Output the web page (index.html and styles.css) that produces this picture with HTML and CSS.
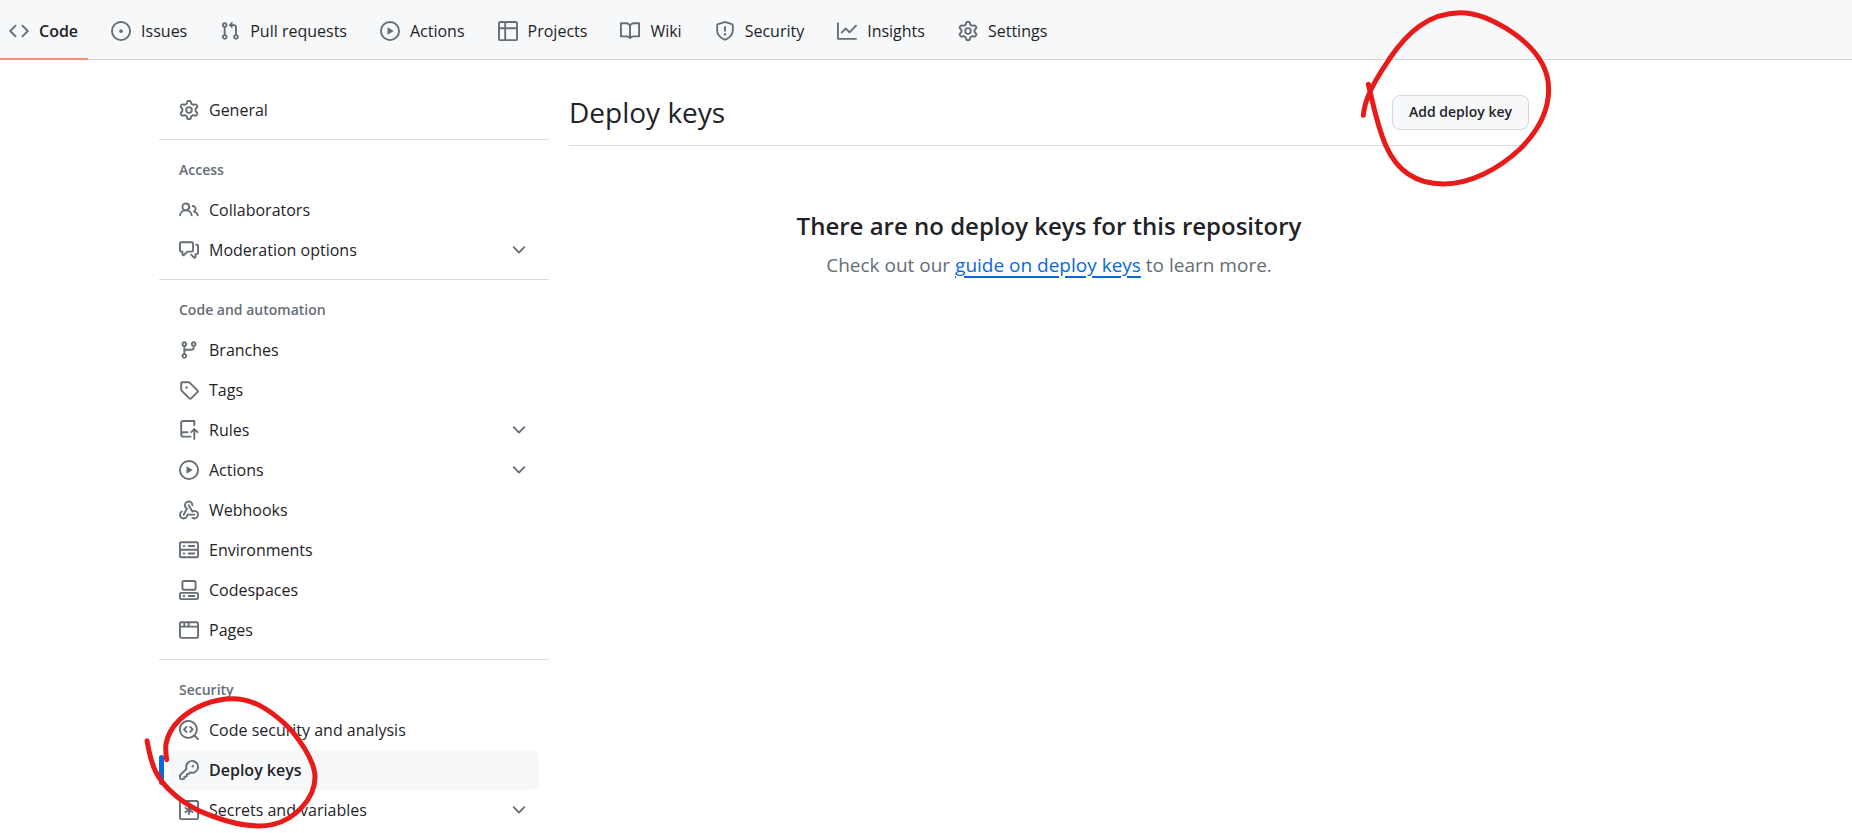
FILE: index.html
```html
<!DOCTYPE html>
<html lang="en">
<head>
<meta charset="utf-8">
<title>Deploy keys</title>
<meta name="viewport" content="width=device-width, initial-scale=1">
<link rel="stylesheet" href="styles.css">
</head>
<body>
<svg class="sprite" aria-hidden="true">
  <symbol id="code" viewBox="0 0 16 16"><path d="m11.28 3.22 4.25 4.25a.75.75 0 0 1 0 1.06l-4.25 4.25a.749.749 0 0 1-1.275-.326.749.749 0 0 1 .215-.734L13.94 8l-3.72-3.72a.749.749 0 0 1 .326-1.275.749.749 0 0 1 .734.215Zm-6.56 0a.751.751 0 0 1 1.042.018.751.751 0 0 1 .018 1.042L2.06 8l3.72 3.72a.749.749 0 0 1-.326 1.275.749.749 0 0 1-.734-.215L.47 8.53a.75.75 0 0 1 0-1.06Z"/></symbol>
  <symbol id="issue" viewBox="0 0 16 16"><path d="M8 9.5a1.5 1.5 0 1 0 0-3 1.5 1.5 0 0 0 0 3Z"/><path d="M8 0a8 8 0 1 1 0 16A8 8 0 0 1 8 0ZM1.5 8a6.5 6.5 0 1 0 13 0 6.5 6.5 0 0 0-13 0Z"/></symbol>
  <symbol id="pull" viewBox="0 0 16 16"><path d="M1.5 3.25a2.25 2.25 0 1 1 3 2.122v5.256a2.251 2.251 0 1 1-1.5 0V5.372A2.25 2.25 0 0 1 1.5 3.25Zm5.677-.177L9.573.677A.25.25 0 0 1 10 .854V2.5h1A2.5 2.5 0 0 1 13.5 5v5.628a2.251 2.251 0 1 1-1.5 0V5a1 1 0 0 0-1-1h-1v1.646a.25.25 0 0 1-.427.177L7.177 3.427a.25.25 0 0 1 0-.354ZM3.75 2.5a.75.75 0 1 0 0 1.5.75.75 0 0 0 0-1.5Zm0 9.5a.75.75 0 1 0 0 1.5.75.75 0 0 0 0-1.5Zm8.25.75a.75.75 0 1 0 1.5 0 .75.75 0 0 0-1.5 0Z"/></symbol>
  <symbol id="play" viewBox="0 0 16 16"><path d="M8 0a8 8 0 1 1 0 16A8 8 0 0 1 8 0ZM1.5 8a6.5 6.5 0 1 0 13 0 6.5 6.5 0 0 0-13 0Zm4.879-2.773 4.264 2.559a.25.25 0 0 1 0 .428l-4.264 2.559A.25.25 0 0 1 6 10.559V5.442a.25.25 0 0 1 .379-.215Z"/></symbol>
  <symbol id="table" viewBox="0 0 16 16"><path d="M0 1.75C0 .784.784 0 1.75 0h12.5C15.216 0 16 .784 16 1.75v12.5A1.75 1.75 0 0 1 14.25 16H1.75A1.75 1.75 0 0 1 0 14.25ZM6.5 6.5v8h7.75a.25.25 0 0 0 .25-.25V6.5Zm8-1.5V1.75a.25.25 0 0 0-.25-.25H6.5V5Zm-13 1.5v7.75c0 .138.112.25.25.25H5v-8ZM5 5V1.5H1.75a.25.25 0 0 0-.25.25V5Z"/></symbol>
  <symbol id="book" viewBox="0 0 16 16"><path d="M0 1.75A.75.75 0 0 1 .75 1h4.253c1.227 0 2.317.59 3 1.501A3.743 3.743 0 0 1 11.006 1h4.245a.75.75 0 0 1 .75.75v10.5a.75.75 0 0 1-.75.75h-4.507a2.25 2.25 0 0 0-1.591.659l-.622.621a.75.75 0 0 1-1.06 0l-.622-.621A2.25 2.25 0 0 0 5.258 13H.75a.75.75 0 0 1-.75-.75Zm7.251 10.324.004-5.073-.002-2.253A2.25 2.25 0 0 0 5.003 2.5H1.5v9h3.757a3.75 3.75 0 0 1 1.994.574ZM8.755 4.75l-.004 7.322a3.752 3.752 0 0 1 1.992-.572H14.5v-9h-3.495a2.25 2.25 0 0 0-2.25 2.25Z"/></symbol>
  <symbol id="shield" viewBox="0 0 16 16"><path d="M7.467.133a1.748 1.748 0 0 1 1.066 0l5.25 1.68A1.75 1.75 0 0 1 15 3.48V7c0 1.566-.32 3.182-1.303 4.682-.983 1.498-2.585 2.813-5.032 3.855a1.697 1.697 0 0 1-1.33 0c-2.447-1.042-4.049-2.357-5.032-3.855C1.32 10.182 1 8.566 1 7V3.48a1.75 1.75 0 0 1 1.217-1.667Zm.61 1.429a.25.25 0 0 0-.153 0l-5.25 1.68a.25.25 0 0 0-.174.238V7c0 1.358.275 2.666 1.057 3.86.784 1.194 2.121 2.34 4.366 3.297a.196.196 0 0 0 .154 0c2.245-.956 3.582-2.104 4.366-3.298C13.225 9.666 13.5 8.36 13.5 7V3.48a.251.251 0 0 0-.174-.237l-5.25-1.68ZM8.75 4.75v3a.75.75 0 0 1-1.5 0v-3a.75.75 0 0 1 1.5 0ZM9 10.5a1 1 0 1 1-2 0 1 1 0 0 1 2 0Z"/></symbol>
  <symbol id="graph" viewBox="0 0 16 16"><path d="M1.5 1.75V13.5h13.75a.75.75 0 0 1 0 1.5H.75a.75.75 0 0 1-.75-.75V1.75a.75.75 0 0 1 1.5 0Zm14.28 2.53-5.25 5.25a.75.75 0 0 1-1.06 0L7 7.06 4.28 9.78a.751.751 0 0 1-1.042-.018.751.751 0 0 1-.018-1.042l3.25-3.25a.75.75 0 0 1 1.06 0L10 7.94l4.72-4.72a.751.751 0 0 1 1.042.018.751.751 0 0 1 .018 1.042Z"/></symbol>
  <symbol id="gear" viewBox="0 0 16 16"><path d="M8 0a8.2 8.2 0 0 1 .701.031C9.444.095 9.99.645 10.16 1.29l.288 1.107c.018.066.079.158.212.224.231.114.454.243.668.386.123.082.233.09.299.071l1.103-.303c.644-.176 1.392.021 1.82.63.27.385.506.792.704 1.218.315.675.111 1.422-.364 1.891l-.814.806c-.049.048-.098.147-.088.294.016.257.016.515 0 .772-.01.147.038.246.088.294l.814.806c.475.469.679 1.216.364 1.891a7.977 7.977 0 0 1-.704 1.217c-.428.61-1.176.807-1.82.63l-1.102-.302c-.067-.019-.177-.011-.3.071a5.909 5.909 0 0 1-.668.386c-.133.066-.194.158-.211.224l-.29 1.106c-.168.646-.715 1.196-1.458 1.26a8.006 8.006 0 0 1-1.402 0c-.743-.064-1.289-.614-1.458-1.26l-.289-1.106c-.018-.066-.079-.158-.212-.224a5.738 5.738 0 0 1-.668-.386c-.123-.082-.233-.09-.299-.071l-1.103.303c-.644.176-1.392-.021-1.82-.63a8.12 8.12 0 0 1-.704-1.218c-.315-.675-.111-1.422.363-1.891l.815-.806c.05-.048.098-.147.088-.294a6.214 6.214 0 0 1 0-.772c.01-.147-.038-.246-.088-.294l-.815-.806C.635 6.045.431 5.298.746 4.623a7.92 7.92 0 0 1 .704-1.217c.428-.61 1.176-.807 1.82-.63l1.102.302c.067.019.177.011.3-.071.214-.143.437-.272.668-.386.133-.066.194-.158.211-.224l.29-1.106C6.009.645 6.556.095 7.299.03 7.53.01 7.764 0 8 0Zm-.571 1.525c-.036.003-.108.036-.137.146l-.289 1.105c-.147.561-.549.967-.998 1.189-.173.086-.34.183-.5.29-.417.278-.97.423-1.529.27l-1.103-.303c-.109-.03-.175.016-.195.045-.22.312-.412.644-.573.99-.014.031-.021.11.059.19l.815.806c.411.406.562.957.53 1.456a4.709 4.709 0 0 0 0 .582c.032.499-.119 1.05-.53 1.456l-.815.806c-.081.08-.073.159-.059.19.162.346.353.677.573.989.02.03.085.076.195.046l1.102-.303c.56-.153 1.113-.008 1.53.27.161.107.328.204.501.29.447.222.85.629.997 1.189l.289 1.105c.029.109.101.143.137.146a6.6 6.6 0 0 0 1.142 0c.036-.003.108-.036.137-.146l.289-1.105c.147-.561.549-.967.998-1.189.173-.086.34-.183.5-.29.417-.278.97-.423 1.529-.27l1.103.303c.109.029.175-.016.195-.045.22-.313.411-.644.573-.99.014-.031.021-.11-.059-.19l-.815-.806c-.411-.406-.562-.957-.53-1.456a4.709 4.709 0 0 0 0-.582c-.032-.499.119-1.05.53-1.456l.815-.806c.081-.08.073-.159.059-.19a6.464 6.464 0 0 0-.573-.989c-.02-.03-.085-.076-.195-.046l-1.102.303c-.56.153-1.113.008-1.53-.27a4.44 4.44 0 0 0-.501-.29c-.447-.222-.85-.629-.997-1.189l-.289-1.105c-.029-.11-.101-.143-.137-.146a6.6 6.6 0 0 0-1.142 0ZM11 8a3 3 0 1 1-6 0 3 3 0 0 1 6 0ZM9.5 8a1.5 1.5 0 1 0-3.001.001A1.5 1.5 0 0 0 9.5 8Z"/></symbol>
  <symbol id="people" viewBox="0 0 16 16"><path d="M2 5.5a3.5 3.5 0 1 1 5.898 2.549 5.508 5.508 0 0 1 3.034 4.084.75.75 0 1 1-1.482.235 4 4 0 0 0-7.9 0 .75.75 0 0 1-1.482-.236A5.507 5.507 0 0 1 3.102 8.05 3.493 3.493 0 0 1 2 5.5ZM11 4a3.001 3.001 0 0 1 2.22 5.018 5.01 5.01 0 0 1 2.56 3.012.749.749 0 0 1-.885.954.752.752 0 0 1-.549-.514 3.507 3.507 0 0 0-2.522-2.372.75.75 0 0 1-.574-.73v-.352a.75.75 0 0 1 .416-.672A1.5 1.5 0 0 0 11 5.5.75.75 0 0 1 11 4Zm-5.5-.5a2 2 0 1 0-.001 3.999A2 2 0 0 0 5.5 3.5Z"/></symbol>
  <symbol id="discussion" viewBox="0 0 16 16"><path d="M1.75 1h8.5c.966 0 1.75.784 1.75 1.75v5.5A1.75 1.75 0 0 1 10.25 10H7.061l-2.574 2.573A1.458 1.458 0 0 1 2 11.543V10h-.25A1.75 1.75 0 0 1 0 8.25v-5.5C0 1.784.784 1 1.75 1ZM1.5 2.75v5.5c0 .138.112.25.25.25h1a.75.75 0 0 1 .75.75v2.19l2.72-2.72a.749.749 0 0 1 .53-.22h3.5a.25.25 0 0 0 .25-.25v-5.5a.25.25 0 0 0-.25-.25h-8.5a.25.25 0 0 0-.25.25Zm13 2a.25.25 0 0 0-.25-.25h-.5a.75.75 0 0 1 0-1.5h.5c.966 0 1.75.784 1.75 1.75v5.5A1.75 1.75 0 0 1 14.25 12H14v1.543a1.458 1.458 0 0 1-2.487 1.03L9.22 12.28a.749.749 0 0 1 .326-1.275.749.749 0 0 1 .734.215l2.22 2.22v-2.19a.75.75 0 0 1 .75-.75h1a.25.25 0 0 0 .25-.25Z"/></symbol>
  <symbol id="chevron" viewBox="0 0 16 16"><path d="M12.78 5.22a.749.749 0 0 1 0 1.06l-4.25 4.25a.749.749 0 0 1-1.06 0L3.22 6.28a.749.749 0 1 1 1.06-1.06L8 8.939l3.72-3.719a.749.749 0 0 1 1.06 0Z"/></symbol>
  <symbol id="branch" viewBox="0 0 16 16"><path d="M9.5 3.25a2.25 2.25 0 1 1 3 2.122V6A2.5 2.5 0 0 1 10 8.5H6a1 1 0 0 0-1 1v1.128a2.251 2.251 0 1 1-1.5 0V5.372a2.25 2.25 0 1 1 1.5 0v1.836A2.493 2.493 0 0 1 6 7h4a1 1 0 0 0 1-1v-.628A2.25 2.25 0 0 1 9.5 3.25Zm-6 0a.75.75 0 1 0 1.5 0 .75.75 0 0 0-1.5 0Zm8.25-.75a.75.75 0 1 0 0 1.5.75.75 0 0 0 0-1.5ZM4.25 12a.75.75 0 1 0 0 1.5.75.75 0 0 0 0-1.5Z"/></symbol>
  <symbol id="tag" viewBox="0 0 16 16"><path d="M1 7.775V2.75C1 1.784 1.784 1 2.75 1h5.025c.464 0 .91.184 1.238.513l6.25 6.25a1.75 1.75 0 0 1 0 2.474l-5.026 5.026a1.75 1.75 0 0 1-2.474 0l-6.25-6.25A1.752 1.752 0 0 1 1 7.775Zm1.5 0c0 .066.026.13.073.177l6.25 6.25a.25.25 0 0 0 .354 0l5.025-5.025a.25.25 0 0 0 0-.354l-6.25-6.25a.25.25 0 0 0-.177-.073H2.75a.25.25 0 0 0-.25.25ZM6 5a1 1 0 1 1 0 2 1 1 0 0 1 0-2Z"/></symbol>
  <symbol id="rules" viewBox="0 0 16 16"><path d="M1 2.5A2.5 2.5 0 0 1 3.5 0h8.75a.75.75 0 0 1 .75.75v3.5a.75.75 0 0 1-1.5 0V1.5h-8a1 1 0 0 0-1 1v6.708A2.493 2.493 0 0 1 3.5 9h3.25a.75.75 0 0 1 0 1.5H3.5a1 1 0 0 0 0 2h5.75a.75.75 0 0 1 0 1.5H3.5A2.5 2.5 0 0 1 1 11.5Zm13.23 7.79h-.001l-1.224-1.224v6.184a.75.75 0 0 1-1.5 0V9.066L10.28 10.29a.75.75 0 0 1-1.06-1.061l2.505-2.504a.75.75 0 0 1 1.06 0L15.29 9.23a.751.751 0 0 1-.018 1.042.751.751 0 0 1-1.042.018Z"/></symbol>
  <symbol id="webhook" viewBox="0 0 16 16"><path d="M5.5 4.25a2.25 2.25 0 0 1 4.5 0 .75.75 0 0 0 1.5 0 3.75 3.75 0 1 0-6.14 2.889l-2.272 4.258a.75.75 0 0 0 1.324.706L7 7.25a.75.75 0 0 0-.309-1.015A2.25 2.25 0 0 1 5.5 4.25Z"/><path d="M7.364 3.607a.75.75 0 0 1 1.03.257l2.608 4.349a3.75 3.75 0 1 1-.628 6.785.75.75 0 0 1 .752-1.299 2.25 2.25 0 1 0-.033-3.88.75.75 0 0 1-1.03-.256L7.107 4.636a.75.75 0 0 1 .257-1.03Z"/><path d="M2.9 8.776A.75.75 0 0 1 2.625 9.8 2.25 2.25 0 1 0 6 11.75a.75.75 0 0 1 .75-.751h5.5a.75.75 0 0 1 0 1.5H7.425a3.751 3.751 0 1 1-5.55-3.998.75.75 0 0 1 1.024.274Z"/></symbol>
  <symbol id="server" viewBox="0 0 16 16"><path d="M1.75 1h12.5c.966 0 1.75.784 1.75 1.75v4c0 .372-.116.717-.314 1 .198.283.314.628.314 1v4a1.75 1.75 0 0 1-1.75 1.75H1.75A1.75 1.75 0 0 1 0 12.75v-4c0-.358.109-.707.314-1a1.739 1.739 0 0 1-.314-1v-4C0 1.784.784 1 1.75 1ZM1.5 2.75v4c0 .138.112.25.25.25h12.5a.25.25 0 0 0 .25-.25v-4a.25.25 0 0 0-.25-.25H1.75a.25.25 0 0 0-.25.25Zm.25 5.75a.25.25 0 0 0-.25.25v4c0 .138.112.25.25.25h12.5a.25.25 0 0 0 .25-.25v-4a.25.25 0 0 0-.25-.25ZM7 4.75A.75.75 0 0 1 7.75 4h4.5a.75.75 0 0 1 0 1.5h-4.5A.75.75 0 0 1 7 4.75ZM7.75 10h4.5a.75.75 0 0 1 0 1.5h-4.5a.75.75 0 0 1 0-1.5ZM3 4.75A.75.75 0 0 1 3.75 4h.5a.75.75 0 0 1 0 1.5h-.5A.75.75 0 0 1 3 4.75ZM3.75 10h.5a.75.75 0 0 1 0 1.5h-.5a.75.75 0 0 1 0-1.5Z"/></symbol>
  <symbol id="codespaces" viewBox="0 0 16 16"><path d="M0 11.25c0-.966.784-1.75 1.75-1.75h12.5c.966 0 1.75.784 1.75 1.75v3A1.75 1.75 0 0 1 14.25 16H1.75A1.75 1.75 0 0 1 0 14.25Zm2-9.5C2 .784 2.784 0 3.75 0h8.5C13.216 0 14 .784 14 1.75v5a1.75 1.75 0 0 1-1.75 1.75h-8.5A1.75 1.75 0 0 1 2 6.75Zm1.75-.25a.25.25 0 0 0-.25.25v5c0 .138.112.25.25.25h8.5a.25.25 0 0 0 .25-.25v-5a.25.25 0 0 0-.25-.25Zm-2 9.5a.25.25 0 0 0-.25.25v3c0 .138.112.25.25.25h12.5a.25.25 0 0 0 .25-.25v-3a.25.25 0 0 0-.25-.25Z"/><path d="M7 12.75a.75.75 0 0 1 .75-.75h4.5a.75.75 0 0 1 0 1.5h-4.5a.75.75 0 0 1-.75-.75Zm-4 0a.75.75 0 0 1 .75-.75h.5a.75.75 0 0 1 0 1.5h-.5a.75.75 0 0 1-.75-.75Z"/></symbol>
  <symbol id="browser" viewBox="0 0 16 16"><path d="M0 2.75C0 1.784.784 1 1.75 1h12.5c.966 0 1.75.784 1.75 1.75v10.5A1.75 1.75 0 0 1 14.25 15H1.75A1.75 1.75 0 0 1 0 13.25ZM14.5 6h-13v7.25c0 .138.112.25.25.25h12.5a.25.25 0 0 0 .25-.25Zm-6-3.5v2h6V2.75a.25.25 0 0 0-.25-.25ZM5 2.5v2h2v-2Zm-3.25 0a.25.25 0 0 0-.25.25V4.5h2v-2Z"/></symbol>
  <symbol id="codescan" viewBox="0 0 16 16"><path d="M8.47 4.97a.75.75 0 0 0 0 1.06L9.94 7.5 8.47 8.97a.75.75 0 1 0 1.06 1.06l2-2a.75.75 0 0 0 0-1.06l-2-2a.75.75 0 0 0-1.06 0ZM6.53 6.03a.75.75 0 0 0-1.06-1.06l-2 2a.75.75 0 0 0 0 1.06l2 2a.75.75 0 1 0 1.06-1.06L5.06 7.5l1.47-1.47Z"/><path d="M12.246 13.307a7.501 7.501 0 1 1 1.06-1.06l2.474 2.473a.749.749 0 1 1-1.06 1.06l-2.474-2.473ZM1.5 7.5a6.002 6.002 0 0 0 3.608 5.504 6.002 6.002 0 0 0 6.486-1.117.748.748 0 0 1 .292-.293A6 6 0 1 0 1.5 7.5Z"/></symbol>
  <symbol id="key" viewBox="0 0 16 16"><path d="M10.5 0a5.499 5.499 0 1 1-1.288 10.848l-.932.932a.749.749 0 0 1-.53.22H7v.75a.749.749 0 0 1-.22.53l-.5.5a.749.749 0 0 1-.53.22H5v.75a.749.749 0 0 1-.22.53l-.5.5a.749.749 0 0 1-.53.22h-2A1.75 1.75 0 0 1 0 14.25v-2c0-.199.079-.389.22-.53l4.932-4.932A5.5 5.5 0 0 1 10.5 0Zm-4 5.5c-.001.431.069.86.205 1.269a.75.75 0 0 1-.181.768L1.5 12.56v1.69c0 .138.112.25.25.25h1.69l.06-.06v-1.19a.75.75 0 0 1 .75-.75h1.19l.06-.06v-1.19a.75.75 0 0 1 .75-.75h1.19l1.023-1.025a.75.75 0 0 1 .768-.18A4 4 0 1 0 6.5 5.5ZM11 6a1 1 0 1 1 0-2 1 1 0 0 1 0 2Z"/></symbol>
  <symbol id="asterisk" viewBox="0 0 16 16"><path d="M0 1.75C0 .784.784 0 1.75 0h12.5C15.216 0 16 .784 16 1.75v12.5A1.75 1.75 0 0 1 14.25 16H1.75A1.75 1.75 0 0 1 0 14.25ZM1.75 1.5a.25.25 0 0 0-.25.25v12.5c0 .138.112.25.25.25h12.5a.25.25 0 0 0 .25-.25V1.75a.25.25 0 0 0-.25-.25Z"/><path d="M8 4a.75.75 0 0 1 .75.75V6.7l1.69-.975a.75.75 0 0 1 .75 1.3L9.5 8l1.69.976a.75.75 0 0 1-.75 1.298L8.75 9.3v1.951a.75.75 0 0 1-1.5 0V9.299l-1.69.976a.75.75 0 0 1-.75-1.3L6.5 8l-1.69-.975a.75.75 0 0 1 .75-1.3l1.69.976V4.75A.75.75 0 0 1 8 4Z"/></symbol>
</svg>

<header class="topbar">
  <nav class="tabs" aria-label="Repository">
    <a class="tab tab-current" href="#" aria-current="page"><svg class="icon"><use href="#code"/></svg>Code</a>
    <a class="tab" href="#"><svg class="icon"><use href="#issue"/></svg>Issues</a>
    <a class="tab" href="#"><svg class="icon"><use href="#pull"/></svg>Pull requests</a>
    <a class="tab" href="#"><svg class="icon"><use href="#play"/></svg>Actions</a>
    <a class="tab" href="#"><svg class="icon"><use href="#table"/></svg>Projects</a>
    <a class="tab" href="#"><svg class="icon"><use href="#book"/></svg>Wiki</a>
    <a class="tab" href="#"><svg class="icon"><use href="#shield"/></svg>Security</a>
    <a class="tab" href="#"><svg class="icon"><use href="#graph"/></svg>Insights</a>
    <a class="tab" href="#"><svg class="icon"><use href="#gear"/></svg>Settings</a>
  </nav>
</header>

<div class="layout">
  <nav class="sidebar" aria-label="Settings">
    <ul class="group">
      <li><a class="item" href="#"><svg class="icon"><use href="#gear"/></svg>General</a></li>
    </ul>
    <section class="section">
      <h2 class="section-title">Access</h2>
      <ul class="group">
        <li><a class="item" href="#"><svg class="icon"><use href="#people"/></svg>Collaborators</a></li>
        <li><button class="item" type="button"><svg class="icon"><use href="#discussion"/></svg>Moderation options<svg class="icon chevron"><use href="#chevron"/></svg></button></li>
      </ul>
    </section>
    <section class="section">
      <h2 class="section-title">Code and automation</h2>
      <ul class="group">
        <li><a class="item" href="#"><svg class="icon"><use href="#branch"/></svg>Branches</a></li>
        <li><a class="item" href="#"><svg class="icon"><use href="#tag"/></svg>Tags</a></li>
        <li><button class="item" type="button"><svg class="icon"><use href="#rules"/></svg>Rules<svg class="icon chevron"><use href="#chevron"/></svg></button></li>
        <li><button class="item" type="button"><svg class="icon"><use href="#play"/></svg>Actions<svg class="icon chevron"><use href="#chevron"/></svg></button></li>
        <li><a class="item" href="#"><svg class="icon"><use href="#webhook"/></svg>Webhooks</a></li>
        <li><a class="item" href="#"><svg class="icon"><use href="#server"/></svg>Environments</a></li>
        <li><a class="item" href="#"><svg class="icon"><use href="#codespaces"/></svg>Codespaces</a></li>
        <li><a class="item" href="#"><svg class="icon"><use href="#browser"/></svg>Pages</a></li>
      </ul>
    </section>
    <section class="section">
      <h2 class="section-title">Security</h2>
      <ul class="group">
        <li><a class="item" href="#"><svg class="icon"><use href="#codescan"/></svg>Code security and analysis</a></li>
        <li class="current">
          <a class="item item-current" href="#" aria-current="page"><svg class="icon"><use href="#key"/></svg>Deploy keys</a>
          <svg class="mark mark-item" viewBox="0 0 600 543" aria-hidden="true"><path d="M110 332C107 312 106 298 108 285C113 255 127 233 150 211C190 174 250 149 308 149C370 149 417 183 460 220C502 258 555 335 555 384C555 450 493 512 430 526C360 542 275 515 206 485C150 457 98 412 77 368C61 334 56 305 51 275"/></svg>
        </li>
        <li><button class="item" type="button"><svg class="icon"><use href="#asterisk"/></svg>Secrets and variables<svg class="icon chevron"><use href="#chevron"/></svg></button></li>
      </ul>
    </section>
  </nav>

  <main class="content">
    <div class="subhead">
      <h1 class="title">Deploy keys</h1>
      <div class="action">
        <button class="btn" type="button">Add deploy key</button>
        <svg class="mark mark-action" viewBox="0 0 720 600" aria-hidden="true"><path d="M70 346C72 323 80 297 90 275C108 235 130 204 150 174C202 98 265 39 360 38C413 38 455 60 500 86C570 130 626 190 626 268C626 335 595 393 540 447C476 507 391 552 310 552C224 552 168 507 137 436C109 370 98 305 85 253"/></svg>
      </div>
    </div>
    <div class="blank">
      <h2 class="blank-title">There are no deploy keys for this repository</h2>
      <p class="blank-text">Check out our <a class="link" href="#">guide on deploy keys</a> to learn more.</p>
    </div>
  </main>
</div>
</body>
</html>
```
FILE: styles.css
```css
* {
  box-sizing: border-box;
}

body {
  margin: 0;
  background: #fff;
  color: #1f2328;
  font-family: "Open Sans", "Noto Sans", sans-serif;
  font-size: 16px;
  line-height: 24px;
}

h1, h2, p, ul {
  margin: 0;
  padding: 0;
}

ul {
  list-style: none;
}

a {
  color: inherit;
  text-decoration: none;
}

button {
  font: inherit;
  color: inherit;
  cursor: pointer;
}

.sprite {
  display: none;
}

.icon {
  flex: none;
  width: 20px;
  height: 20px;
  fill: #656d76;
}

.topbar {
  background: #f6f8fa;
  border-bottom: 1px solid #d0d7de;
}

.tabs {
  display: flex;
  gap: 13px;
}

.tab {
  display: flex;
  align-items: center;
  gap: 10px;
  height: 59px;
  padding: 2px 10px 0;
  white-space: nowrap;
}

.tab-current {
  margin-bottom: -1px;
  height: 60px;
  padding: 1px 10px 0 9px;
  font-weight: 600;
  box-shadow: inset 0 -2px #fd8c73;
}

.layout {
  display: grid;
  grid-template-columns: 390px minmax(0, 1fr);
  gap: 20px;
  max-width: 1529px;
  padding: 30px 0 0 159px;
}

.section {
  margin-top: 9px;
  padding-top: 10px;
  border-top: 1px solid #d8dee4;
}

.section-title {
  padding: 8px 20px;
  color: #656d76;
  font-size: 14px;
  font-weight: 600;
}

.group {
  padding: 0 10px;
}

.item {
  display: flex;
  align-items: center;
  gap: 10px;
  width: 100%;
  padding: 8px 10px;
  border: 0;
  border-radius: 8px;
  background: none;
  text-align: left;
}

.item-current {
  background: #f6f8fa;
  font-weight: 600;
}

.chevron {
  margin-left: auto;
}

.current {
  position: relative;
}

.current::before {
  content: "";
  position: absolute;
  top: 5px;
  left: -10px;
  width: 5px;
  height: 30px;
  border-radius: 8px;
  background: #0969da;
}

.mark {
  position: absolute;
  z-index: 1;
  fill: none;
  stroke: #e81b1b;
  stroke-width: 15;
  stroke-linecap: round;
  pointer-events: none;
}

.mark-item {
  top: -101px;
  left: -39px;
  width: 200px;
  height: 181px;
}

.mark-action {
  top: -95px;
  right: -51px;
  width: 240px;
  height: 200px;
}

.subhead {
  display: flex;
  align-items: center;
  justify-content: space-between;
  padding: 2px 0 13px;
  border-bottom: 1px solid #d8dee4;
}

.title {
  font-size: 28px;
  font-weight: 400;
  line-height: 40px;
}

.action {
  position: relative;
}

.btn {
  display: block;
  height: 35px;
  padding: 0 16px;
  border: 1px solid #d0d7de;
  border-radius: 8px;
  background: #f6f8fa;
  font-size: 14px;
  font-weight: 600;
}

.blank {
  padding: 60px 40px;
  text-align: center;
}

.blank-title {
  font-size: 24px;
  font-weight: 600;
  line-height: 40px;
}

.blank-text {
  color: #656d76;
  font-size: 19px;
  line-height: 38px;
}

.link {
  color: #0969da;
  text-decoration: underline;
  text-decoration-thickness: 2px;
  text-underline-offset: 4px;
}
```
